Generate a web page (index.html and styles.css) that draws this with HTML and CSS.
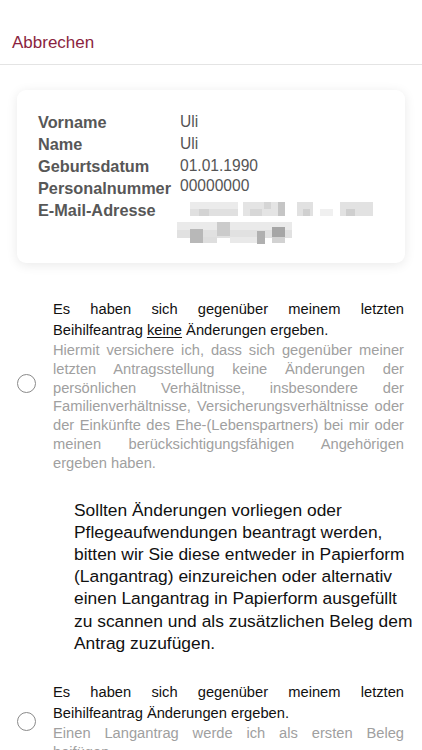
FILE: index.html
```html
<!DOCTYPE html>
<html lang="de">
<head>
<meta charset="utf-8">
<title>Beihilfeantrag</title>
<link rel="stylesheet" href="styles.css">
</head>
<body>
<header class="topbar">
  <span class="cancel">Abbrechen</span>
</header>

<section class="card">
  <div class="row"><span class="label">Vorname</span><span class="value">Uli</span></div>
  <div class="row"><span class="label">Name</span><span class="value">Uli</span></div>
  <div class="row"><span class="label">Geburtsdatum</span><span class="value">01.01.1990</span></div>
  <div class="row"><span class="label">Personalnummer</span><span class="value raised">00000000</span></div>
  <div class="row email"><span class="label">E-Mail-Adresse</span>
    <span class="value">
      <svg class="mosaic" width="200" height="46" viewBox="176 200 200 46" aria-hidden="true">
        <rect x="190" y="203" width="48" height="7" fill="#ebebeb"/>
        <rect x="190" y="210" width="48" height="7" fill="#e0e0e0"/>
        <rect x="199" y="210" width="10" height="7" fill="#d3d3d3"/>
        <rect x="243" y="203" width="40" height="14" fill="#e4e4e4"/>
        <rect x="250" y="210" width="12" height="7" fill="#d7d7d7"/>
        <rect x="264" y="203" width="7" height="7" fill="#d5d5d5"/>
        <rect x="278" y="203" width="7" height="14" fill="#c5c5c5"/>
        <rect x="297" y="203" width="16" height="14" fill="#e1e1e1"/>
        <rect x="303" y="210" width="7" height="7" fill="#d0d0d0"/>
        <rect x="320" y="210" width="13" height="7" fill="#f0f0f0"/>
        <rect x="340" y="203" width="33" height="14" fill="#e2e2e2"/>
        <rect x="346" y="210" width="9" height="7" fill="#cfcfcf"/>
        <rect x="177" y="223" width="115" height="8" fill="#eaeaea"/>
        <rect x="177" y="231" width="115" height="8" fill="#e1e1e1"/>
        <rect x="190" y="230" width="13" height="14" fill="#b8b8b8"/>
        <rect x="203" y="238" width="14" height="6" fill="#dedede"/>
        <rect x="217" y="223" width="13" height="14" fill="#cbcbcb"/>
        <rect x="230" y="238" width="27" height="6" fill="#e9e9e9"/>
        <rect x="257" y="232" width="8" height="13" fill="#b0b0b0"/>
        <rect x="272" y="228" width="13" height="10" fill="#a6a6a6"/>
        <rect x="272" y="238" width="13" height="6" fill="#d2d2d2"/>
      </svg>
    </span>
  </div>
</section>

<section class="option first">
  <span class="radio"></span>
  <div class="option-text">
    <p class="strong">
      <span class="jl">Es haben sich gegenüber meinem letzten</span>
      <span class="ll">Beihilfeantrag <u>keine</u> Änderungen ergeben.</span>
    </p>
    <p class="muted">
      <span class="jl">Hiermit versichere ich, dass sich gegenüber meiner</span>
      <span class="jl">letzten Antragsstellung keine Änderungen der</span>
      <span class="jl">persönlichen Verhältnisse, insbesondere der</span>
      <span class="jl">Familienverhältnisse, Versicherungsverhältnisse oder</span>
      <span class="jl">der Einkünfte des Ehe-(Lebenspartners) bei mir oder</span>
      <span class="jl">meinen berücksichtigungsfähigen Angehörigen</span>
      <span class="ll">ergeben haben.</span>
    </p>
  </div>
</section>

<p class="notice">Sollten Änderungen vorliegen oder<br>Pflegeaufwendungen beantragt werden,<br>bitten wir Sie diese entweder in Papierform<br>(Langantrag) einzureichen oder alternativ<br>einen Langantrag in Papierform ausgefüllt<br>zu scannen und als zusätzlichen Beleg dem<br>Antrag zuzufügen.</p>

<section class="option second">
  <span class="radio"></span>
  <div class="option-text">
    <p class="strong">
      <span class="jl">Es haben sich gegenüber meinem letzten</span>
      <span class="ll">Beihilfeantrag Änderungen ergeben.</span>
    </p>
    <p class="muted">
      <span class="jl">Einen Langantrag werde ich als ersten Beleg</span>
      <span class="ll">beifügen.</span>
    </p>
  </div>
</section>
</body>
</html>
```

FILE: styles.css
```css
* { box-sizing: border-box; }

html, body {
  margin: 0;
  padding: 0;
  background: #ffffff;
  font-family: "Liberation Sans", Arial, sans-serif;
  color: #111111;
}

body { width: 422px; }

.topbar {
  height: 65px;
  padding: 33px 0 0 12px;
  border-bottom: 1px solid #e4e4e4;
}

.cancel {
  display: block;
  font-size: 17px;
  line-height: 20px;
  color: #8b1f40;
}

.card {
  margin: 25px 17px 0 17px;
  padding: 21px 21px 18px 21px;
  background: #ffffff;
  border-radius: 9px;
  box-shadow: 0 2px 12px rgba(0, 0, 0, 0.09);
}

.row {
  display: grid;
  grid-template-columns: 142px 1fr;
  font-size: 15.6px;
  line-height: 22px;
  color: #555555;
}

.label {
  font-weight: bold;
  font-size: 16.3px;
  color: #575757;
}

.value { font-weight: normal; }

.raised { margin-top: -2.5px; }

.row.email { height: 46px; }

.mosaic {
  display: block;
  margin-left: -4px;
}

.option {
  display: flex;
  align-items: center;
  padding: 0 18px 0 17px;
}

.option.first { margin-top: 36px; }
.option.second { margin-top: 28px; }

.radio {
  flex: 0 0 19px;
  width: 19px;
  height: 19px;
  border: 1.6px solid #8a8a8a;
  border-radius: 50%;
  margin-right: 17px;
}

.option.first .radio { margin-bottom: 4px; }

.option-text {
  flex: 1;
  font-size: 14.7px;
}

.option-text p { margin: 0; }

.strong {
  line-height: 21px;
  color: #111111;
}

.muted {
  line-height: 18.8px;
  color: #a0a0a0;
}

.jl {
  display: block;
  text-align: justify;
  text-align-last: justify;
}

.ll {
  display: block;
  text-align: left;
}

u {
  text-decoration-thickness: 1px;
  text-underline-offset: 2px;
}

.notice {
  margin: 26px 0 0 0;
  padding: 0 4px 0 74px;
  font-size: 17.4px;
  line-height: 22.2px;
  white-space: nowrap;
  color: #111111;
}
```
